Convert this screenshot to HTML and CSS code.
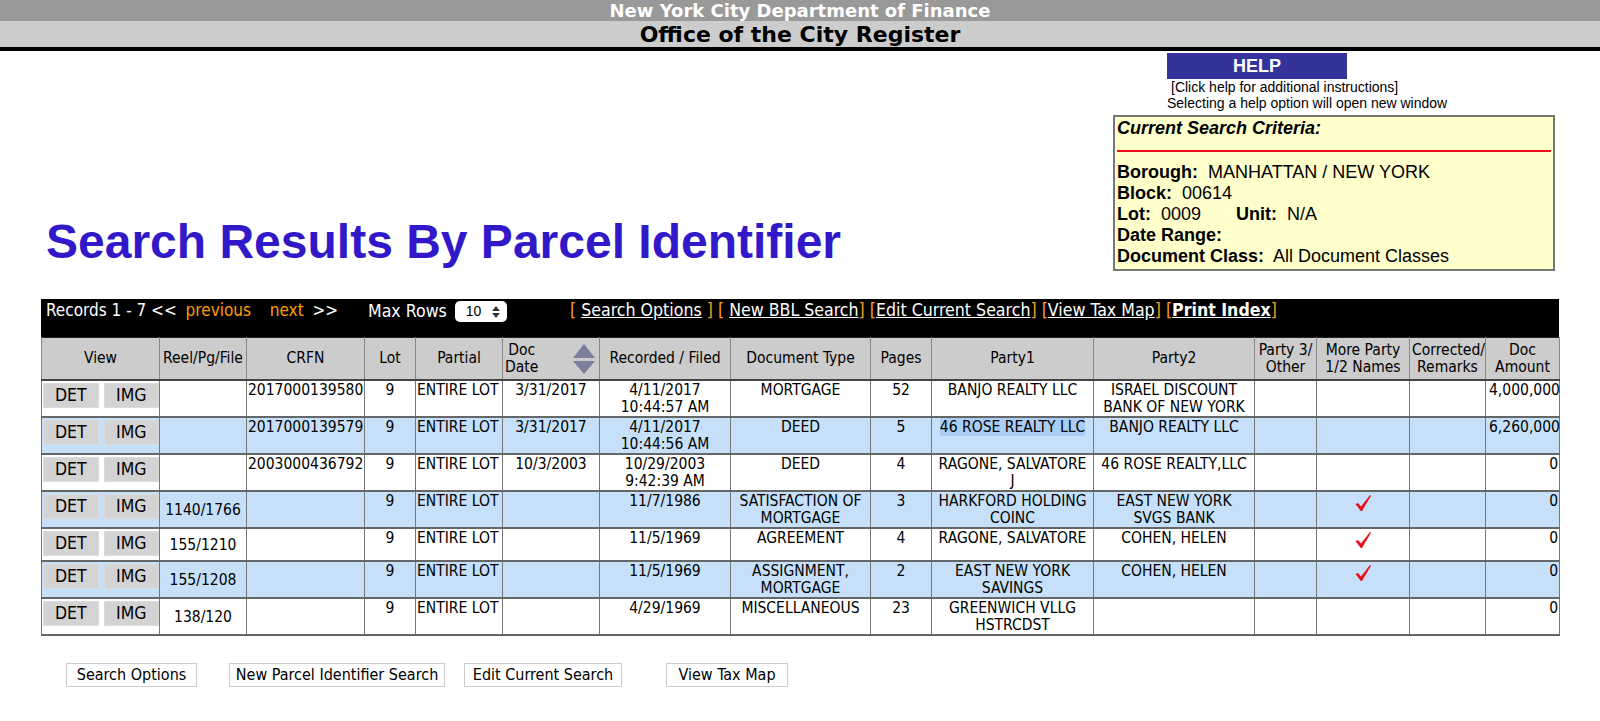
FILE: index.html
```html
<!DOCTYPE html>
<html>
<head>
<meta charset="utf-8">
<title>Search Results By Parcel Identifier</title>
<link rel="stylesheet" href="styles.css">
</head>
<body>
<div class="hdr1">New York City Department of Finance</div>
<div class="hdr2">Office of the City Register</div>

<div class="top">
  <h1 class="title">Search Results By Parcel Identifier</h1>
  <div class="side">
    <div class="help">
      <div class="help-btn">HELP</div>
      <div class="help-note">[Click help for additional instructions]</div>
      <div class="help-note2">Selecting a help option will open new window</div>
    </div>
    <div class="criteria">
      <div class="crit-title">Current Search Criteria:</div>
      <div class="crit-rule"></div>
      <div><b>Borough:</b>&nbsp; MANHATTAN / NEW YORK</div>
      <div><b>Block:</b>&nbsp; 00614</div>
      <div><b>Lot:</b>&nbsp; 0009 <b class="unit">Unit:</b>&nbsp; N/A</div>
      <div><b>Date Range:</b></div>
      <div><b>Document Class:</b>&nbsp; All Document Classes</div>
    </div>
  </div>
</div>

<div class="results">
  <div class="toolbar">
    <div class="tb-nav">Records 1 - 7 &lt;&lt; <span class="orange">previous</span> <span class="orange next">next</span> &gt;&gt;</div>
    <div class="tb-max">Max Rows <span class="sel"><span>10</span><svg width="8" height="12" viewBox="0 0 8 12"><path d="M4 0 L8 5 L0 5 Z M0 7 L8 7 L4 12 Z" fill="#333"/></svg></span></div>
    <div class="tb-links">
      <span class="br">[</span> <a class="lnk">Search Options</a> <span class="br">]</span>
      <span class="br">[</span> <a class="lnk">New BBL Search</a><span class="br">]</span>
      <span class="br">[</span><a class="lnk">Edit Current Search</a><span class="br">]</span>
      <span class="br">[</span><a class="lnk">View Tax Map</a><span class="br">]</span>
      <span class="br">[</span><a class="lnk strong">Print Index</a><span class="br">]</span>
    </div>
  </div>
  <table class="grid">
    <colgroup>
      <col class="c-view"><col class="c-reel"><col class="c-crfn"><col class="c-lot"><col class="c-part"><col class="c-date"><col class="c-rec"><col class="c-type"><col class="c-pages"><col class="c-p1"><col class="c-p2"><col class="c-p3"><col class="c-more"><col class="c-corr"><col class="c-amt">
    </colgroup>
    <thead>
      <tr>
        <th>View</th>
        <th>Reel/Pg/File</th>
        <th>CRFN</th>
        <th>Lot</th>
        <th>Partial</th>
        <th class="th-date"><div class="datehd"><span>Doc<br>Date</span><svg width="24" height="32" viewBox="0 0 24 32"><path d="M12 1 L23 15 L1 15 Z" fill="#7b7f9c"/><path d="M1 18 L23 18 L12 31 Z" fill="#7b7f9c"/></svg></div></th>
        <th>Recorded / Filed</th>
        <th>Document Type</th>
        <th>Pages</th>
        <th>Party1</th>
        <th>Party2</th>
        <th>Party 3/<br>Other</th>
        <th>More Party<br>1/2 Names</th>
        <th>Corrected/<br>Remarks</th>
        <th>Doc<br>Amount</th>
      </tr>
    </thead>
    <tbody>
      <tr>
        <td class="view"><div class="vbtns"><span class="vbtn">DET</span><span class="vbtn">IMG</span></div></td>
        <td class="reel"></td>
        <td class="left">2017000139580</td>
        <td>9</td>
        <td class="left">ENTIRE LOT</td>
        <td>3/31/2017</td>
        <td>4/11/2017<br>10:44:57 AM</td>
        <td>MORTGAGE</td>
        <td>52</td>
        <td>BANJO REALTY LLC</td>
        <td>ISRAEL DISCOUNT BANK OF NEW YORK</td>
        <td></td>
        <td></td>
        <td></td>
        <td class="right">4,000,000</td>
      </tr>
      <tr class="alt">
        <td class="view"><div class="vbtns"><span class="vbtn">DET</span><span class="vbtn">IMG</span></div></td>
        <td class="reel"></td>
        <td class="left">2017000139579</td>
        <td>9</td>
        <td class="left">ENTIRE LOT</td>
        <td>3/31/2017</td>
        <td>4/11/2017<br>10:44:56 AM</td>
        <td>DEED</td>
        <td>5</td>
        <td><span class="hl">46 ROSE REALTY LLC</span></td>
        <td>BANJO REALTY LLC</td>
        <td></td>
        <td></td>
        <td></td>
        <td class="right">6,260,000</td>
      </tr>
      <tr>
        <td class="view"><div class="vbtns"><span class="vbtn">DET</span><span class="vbtn">IMG</span></div></td>
        <td class="reel"></td>
        <td class="left">2003000436792</td>
        <td>9</td>
        <td class="left">ENTIRE LOT</td>
        <td>10/3/2003</td>
        <td>10/29/2003<br>9:42:39 AM</td>
        <td>DEED</td>
        <td>4</td>
        <td>RAGONE, SALVATORE J</td>
        <td>46 ROSE REALTY,LLC</td>
        <td></td>
        <td></td>
        <td></td>
        <td class="right">0</td>
      </tr>
      <tr class="alt">
        <td class="view"><div class="vbtns"><span class="vbtn">DET</span><span class="vbtn">IMG</span></div></td>
        <td class="reel">1140/1766</td>
        <td class="left"></td>
        <td>9</td>
        <td class="left">ENTIRE LOT</td>
        <td></td>
        <td>11/7/1986</td>
        <td>SATISFACTION OF MORTGAGE</td>
        <td>3</td>
        <td>HARKFORD HOLDING COINC</td>
        <td>EAST NEW YORK SVGS BANK</td>
        <td></td>
        <td><svg class="check" width="18" height="18" viewBox="0 0 18 18"><path d="M1.5 10 L4 9 L7 12.5 L16 1 L17 1.8 L8 17 L6.8 17 Z" fill="#e8101a"/></svg></td>
        <td></td>
        <td class="right">0</td>
      </tr>
      <tr>
        <td class="view"><div class="vbtns"><span class="vbtn">DET</span><span class="vbtn">IMG</span></div></td>
        <td class="reel">155/1210</td>
        <td class="left"></td>
        <td>9</td>
        <td class="left">ENTIRE LOT</td>
        <td></td>
        <td>11/5/1969</td>
        <td>AGREEMENT</td>
        <td>4</td>
        <td>RAGONE, SALVATORE</td>
        <td>COHEN, HELEN</td>
        <td></td>
        <td><svg class="check" width="18" height="18" viewBox="0 0 18 18"><path d="M1.5 10 L4 9 L7 12.5 L16 1 L17 1.8 L8 17 L6.8 17 Z" fill="#e8101a"/></svg></td>
        <td></td>
        <td class="right">0</td>
      </tr>
      <tr class="alt">
        <td class="view"><div class="vbtns"><span class="vbtn">DET</span><span class="vbtn">IMG</span></div></td>
        <td class="reel">155/1208</td>
        <td class="left"></td>
        <td>9</td>
        <td class="left">ENTIRE LOT</td>
        <td></td>
        <td>11/5/1969</td>
        <td>ASSIGNMENT, MORTGAGE</td>
        <td>2</td>
        <td>EAST NEW YORK SAVINGS</td>
        <td>COHEN, HELEN</td>
        <td></td>
        <td><svg class="check" width="18" height="18" viewBox="0 0 18 18"><path d="M1.5 10 L4 9 L7 12.5 L16 1 L17 1.8 L8 17 L6.8 17 Z" fill="#e8101a"/></svg></td>
        <td></td>
        <td class="right">0</td>
      </tr>
      <tr>
        <td class="view"><div class="vbtns"><span class="vbtn">DET</span><span class="vbtn">IMG</span></div></td>
        <td class="reel">138/120</td>
        <td class="left"></td>
        <td>9</td>
        <td class="left">ENTIRE LOT</td>
        <td></td>
        <td>4/29/1969</td>
        <td>MISCELLANEOUS</td>
        <td>23</td>
        <td>GREENWICH VLLG HSTRCDST</td>
        <td></td>
        <td></td>
        <td></td>
        <td></td>
        <td class="right">0</td>
      </tr>
    </tbody>
  </table>
</div>

<div class="actions">
  <button class="act act-1">Search Options</button>
  <button class="act act-2">New Parcel Identifier Search</button>
  <button class="act act-3">Edit Current Search</button>
  <button class="act act-4">View Tax Map</button>
</div>
</body>
</html>
```
FILE: styles.css
```css
body {
  margin: 0;
  background: #fff;
  color: #000;
  font-family: "Liberation Sans", Arial, sans-serif;
}

.hdr1 {
  height: 21px;
  background: #999;
  color: #fff;
  text-align: center;
  font: bold 18px/22px "DejaVu Sans", sans-serif;
}

.hdr2 {
  height: 26px;
  background: #ccc;
  color: #000;
  text-align: center;
  font: bold 22px/27px "DejaVu Sans", sans-serif;
  border-bottom: 4px solid #000;
}

.top {
  display: flex;
  justify-content: space-between;
  align-items: flex-start;
}

.title {
  margin: 167px 0 0 46px;
  font: bold 48px/48px "Liberation Sans", Arial, sans-serif;
  color: #3118c8;
}

.side {
  width: 442px;
  margin-right: 45px;
}

.help {
  padding-left: 54px;
}

.help-btn {
  width: 180px;
  height: 26px;
  margin-top: 2px;
  background: #333399;
  color: #fff;
  text-align: center;
  font: bold 18px/27px "Liberation Sans", Arial, sans-serif;
}

.help-note,
.help-note2 {
  font-size: 14px;
  line-height: 16px;
}

.help-note {
  padding-left: 4px;
}

.criteria {
  margin-top: 4px;
  border: 2px solid #777;
  background: #ffffcc;
  padding: 1px 2px 2px;
  font-size: 18px;
  line-height: 21px;
}

.crit-title {
  font-weight: bold;
  font-style: italic;
}

.crit-rule {
  height: 2px;
  background: #e8101a;
  margin: 11px 0 10px;
}

.unit {
  margin-left: 30px;
}

.results {
  margin: 28px 0 0 41px;
  width: 1518px;
}

.toolbar {
  display: flex;
  align-items: flex-start;
  height: 38px;
  padding-left: 5px;
  background: #000;
  color: #fff;
  white-space: nowrap;
  font: 17px/22px "DejaVu Sans Condensed", sans-serif;
}

.tb-nav {
  width: 322px;
}

.orange {
  color: #ff9c00;
  margin-left: 4px;
}

.next {
  margin-left: 14px;
  margin-right: 4px;
}

.tb-max {
  width: 202px;
  display: flex;
  align-items: center;
  font-size: 17.6px;
}

.sel {
  display: inline-flex;
  align-items: center;
  justify-content: space-between;
  width: 52px;
  height: 21px;
  margin: 2px 0 0 8px;
  padding: 0 7px 0 11px;
  box-sizing: border-box;
  background: #fff;
  border-radius: 5px;
  color: #000;
  font: 14px/21px "Liberation Sans", Arial, sans-serif;
}

.tb-links {
  font-size: 17.6px;
}

.br {
  color: #f5a21f;
}

.lnk {
  color: #fff;
  text-decoration: underline;
}

.strong {
  font-weight: bold;
}

.grid {
  width: 1518px;
  border-collapse: collapse;
  table-layout: fixed;
  border: 1px solid #222;
  font: 15.5px/17px "DejaVu Sans Condensed", "DejaVu Sans", sans-serif;
}

.c-view { width: 118px; }
.c-reel { width: 87px; }
.c-crfn { width: 118px; }
.c-lot { width: 51px; }
.c-part { width: 87px; }
.c-date { width: 97px; }
.c-rec { width: 131px; }
.c-type { width: 140px; }
.c-pages { width: 61px; }
.c-p1 { width: 162px; }
.c-p2 { width: 161px; }
.c-p3 { width: 62px; }
.c-more { width: 93px; }
.c-corr { width: 76px; }
.c-amt { width: 74px; }

.grid th {
  height: 41px;
  padding: 0 2px;
  background: #ccc;
  font-weight: normal;
  text-align: center;
  vertical-align: middle;
  border-left: 1px solid #888;
  border-right: 1px solid #888;
  border-bottom: 2px solid #444;
}

.th-date {
  text-align: left;
}

.datehd {
  display: flex;
  align-items: center;
  justify-content: space-between;
  padding-right: 1px;
}

.grid td {
  padding: 1px 3px 0;
  text-align: center;
  vertical-align: top;
  border-left: 1px solid #777;
  border-right: 1px solid #777;
  border-bottom: 2px solid #666;
  background: #fff;
}

.grid tr.alt td {
  background: #c6e0fa;
}

.grid td.left {
  text-align: left;
  padding-left: 1px;
  padding-right: 0;
}

.grid td.right {
  text-align: right;
  padding-right: 1px;
}

.grid td.reel {
  vertical-align: middle;
}

.grid td.view {
  padding: 2px 0 4px 1px;
}

.vbtns {
  display: flex;
  gap: 5px;
}

.vbtn {
  width: 56px;
  height: 25px;
  background: #d3d3d3;
  box-shadow: inset 0 0 0 1px #dcdcdc;
  text-align: center;
  font: 17.5px/25px "DejaVu Sans Condensed", "DejaVu Sans", sans-serif;
}

.hl {
  background: #a9cdf4;
}

.check {
  display: block;
  margin: 1px auto 0;
}

.actions {
  display: flex;
  align-items: center;
  margin-top: 27px;
  padding-left: 66px;
}

.act {
  height: 24px;
  padding: 0;
  background: #fff;
  border: 1px solid #ccc;
  border-radius: 0;
  color: #000;
  text-align: center;
  font: 16px/22px "DejaVu Sans Condensed", sans-serif;
}

.act-1 { width: 131px; }
.act-2 { width: 216px; margin-left: 32px; }
.act-3 { width: 158px; margin-left: 19px; }
.act-4 { width: 122px; margin-left: 44px; }
```
